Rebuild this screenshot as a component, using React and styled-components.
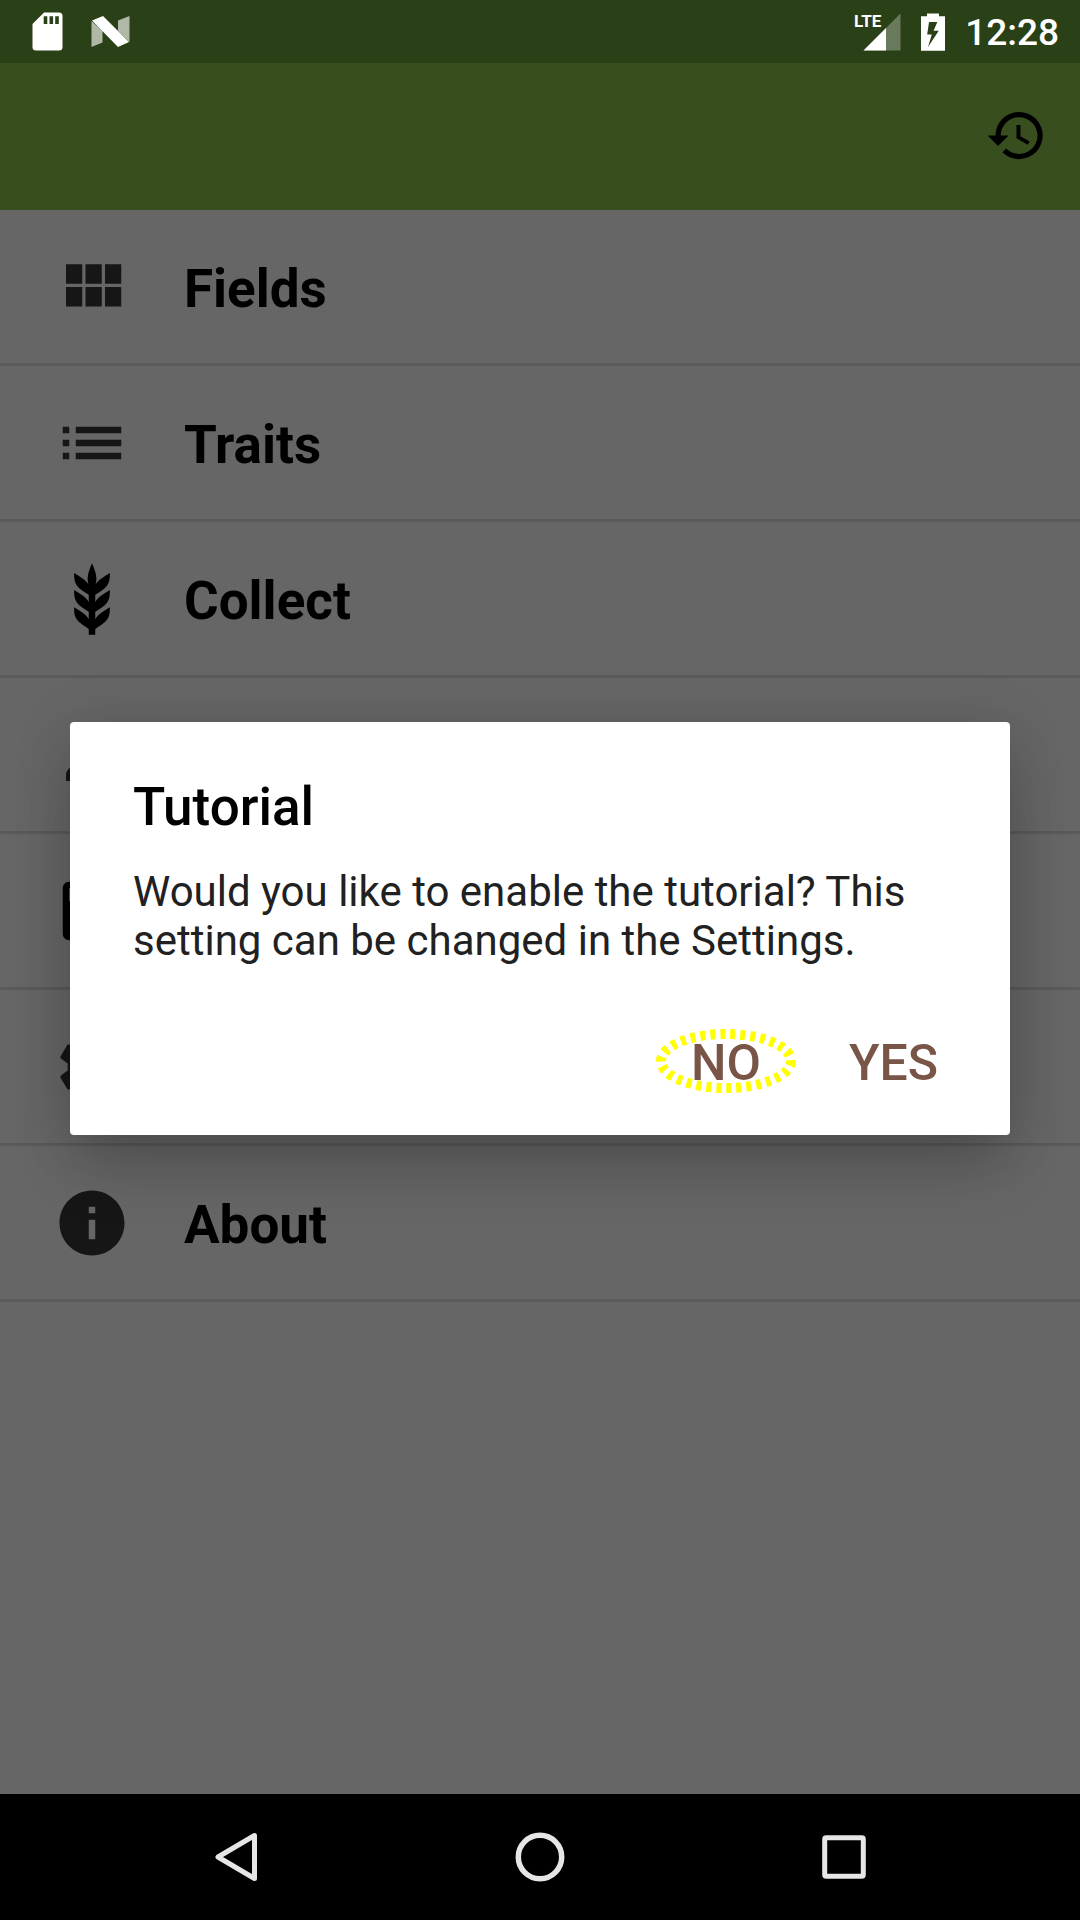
import React from "react";
import styled, { createGlobalStyle } from "styled-components";

const GlobalStyle = createGlobalStyle`
  * { box-sizing: border-box; }
  body { margin: 0; background: #000; font-family: Roboto, "Liberation Sans", sans-serif; }
  button { font-family: inherit; border: 0; background: none; padding: 0; cursor: pointer; }
  svg { display: block; flex: none; }
`;

const Screen = styled.div`
  min-height: 100vh;
  display: grid;
  grid-template-rows: auto 1fr auto;
`;

const StatusBar = styled.header`
  height: 63px;
  padding: 0 21px 0 32px;
  display: flex;
  align-items: center;
  justify-content: space-between;
  background: #2a4017;
  color: #fff;
`;

const StatusGroup = styled.div`
  display: flex;
  align-items: center;
  gap: ${(p) => p.$gap}px;
`;

const Clock = styled.time`
  font-size: 37px;
  line-height: 40px;
  font-weight: 500;
  padding-top: 3px;
`;

const Stage = styled.div`
  display: grid;
  > * { grid-area: 1 / 1; min-width: 0; }
`;

const AppBody = styled.main`
  background: #fff;
`;

const Toolbar = styled.div`
  height: 147px;
  padding: 0 32px 2px;
  display: flex;
  align-items: center;
  justify-content: flex-end;
  background: #8cc34e;
`;

const Menu = styled.ul`
  list-style: none;
  margin: 0;
  padding: 0;
`;

const MenuItem = styled.li`
  border-bottom: 3px solid #e2e2e2;
`;

const MenuButton = styled.button`
  width: 100%;
  height: 153px;
  padding: 0 53px;
  display: flex;
  align-items: center;
  gap: 53px;
  color: #000;
  text-align: left;
`;

const MenuLabel = styled.span`
  font-size: 53px;
  line-height: 62px;
  font-weight: 700;
  padding-top: 5px;
`;

const Scrim = styled.div`
  z-index: 1;
  padding: 0 70px;
  display: flex;
  align-items: center;
  justify-content: center;
  background: rgba(0, 0, 0, 0.6);
`;

const Dialog = styled.section`
  width: 100%;
  padding: 54px 41px 9px 63px;
  border-radius: 4px;
  background: #fff;
  box-shadow: 0 38px 60px -6px rgba(0, 0, 0, 0.18), 0 4px 60px rgba(0, 0, 0, 0.14);
`;

const DialogTitle = styled.h1`
  margin: 0;
  font-size: 53px;
  line-height: 62px;
  font-weight: 500;
  color: #000;
`;

const DialogText = styled.p`
  margin: 29px 21px 0 0;
  font-size: 42px;
  line-height: 49px;
  color: #212121;
`;

const Actions = styled.div`
  margin-top: 35px;
  display: flex;
  justify-content: flex-end;
  gap: 26px;
`;

const ActionButton = styled.button`
  position: relative;
  height: 126px;
  padding: 0 31px;
  font-size: 50px;
  line-height: 60px;
  font-weight: 500;
  color: #795548;
`;

const FocusMark = styled.svg`
  position: absolute;
  top: 29px;
  left: 50%;
  transform: translateX(-50%);
`;

const NavBar = styled.nav`
  height: 126px;
  padding: 0 84px;
  display: grid;
  grid-template-columns: repeat(3, 1fr);
  background: #000;
`;

const NavButton = styled.button`
  display: flex;
  align-items: center;
  justify-content: center;
`;

const Icon = ({ d, size = 78, fill = "#373737" }) => (
  <svg width={size} height={size} viewBox="0 0 24 24" fill={fill} aria-hidden="true">
    <path d={d} />
  </svg>
);

const paths = {
  history:
    "M13 3a9 9 0 0 0-9 9H1l3.89 3.89.07.14L9 12H6c0-3.87 3.13-7 7-7s7 3.13 7 7-3.13 7-7 7c-1.93 0-3.68-.79-4.94-2.06l-1.42 1.42A8.954 8.954 0 0 0 13 21a9 9 0 0 0 0-18zm-1 5v5l4.28 2.54.72-1.21-3.5-2.08V8H12z",
  fields:
    "M4 11h5V5H4v6zm0 7h5v-6H4v6zm6 0h5v-6h-5v6zm6 0h5v-6h-5v6zm-6-7h5V5h-5v6zm6-6v6h5V5h-5z",
  traits:
    "M3 13h2v-2H3v2zm0 4h2v-2H3v2zm0-8h2V7H3v2zm4 4h14v-2H7v2zm0 4h14v-2H7v2zM7 7v2h14V7H7z",
  collect:
    "M7.33 18.33C6.5 17.17 6.5 15.83 6.5 14.5C8.17 15.5 9.83 16.5 10.67 17.67L11 18.23V15.95C9.5 15.05 8.08 14.13 7.33 13.08C6.5 11.92 6.5 10.58 6.5 9.25C8.17 10.25 9.83 11.25 10.67 12.42L11 13V10.7C9.5 9.8 8.08 8.88 7.33 7.83C6.5 6.67 6.5 5.33 6.5 4C8.17 5 9.83 6 10.67 7.17C10.77 7.31 10.86 7.46 10.94 7.62C10.77 7 10.66 6.42 10.65 5.82C10.64 4.27 11.3 2.64 12 1C12.7 2.64 13.36 4.27 13.35 5.82C13.34 6.42 13.23 7 13.06 7.62C13.14 7.46 13.23 7.31 13.33 7.17C14.17 6 15.83 5 17.5 4C17.5 5.33 17.5 6.67 16.67 7.83C15.92 8.88 14.5 9.8 13 10.7V13L13.33 12.42C14.17 11.25 15.83 10.25 17.5 9.25C17.5 10.58 17.5 11.92 16.67 13.08C15.92 14.13 14.5 15.05 13 15.95V18.23L13.33 17.67C14.17 16.5 15.83 15.5 17.5 14.5C17.5 15.83 17.5 17.17 16.67 18.33C15.92 19.38 14.5 20.3 13 21.2V23H11V21.2C9.5 20.3 8.08 19.38 7.33 18.33Z",
  profile:
    "M12 12c2.21 0 4-1.79 4-4s-1.79-4-4-4-4 1.79-4 4 1.79 4 4 4zm0 2c-2.67 0-8 1.34-8 4v2h16v-2c0-2.66-5.33-4-8-4z",
  save:
    "M17 3H5c-1.11 0-2 .9-2 2v14c0 1.1.89 2 2 2h14c1.1 0 2-.9 2-2V7l-4-4zm-5 16c-1.66 0-3-1.34-3-3s1.34-3 3-3 3 1.34 3 3-1.34 3-3 3zm3-10H5V5h10v4z",
  settings:
    "M19.43 12.98c.04-.32.07-.64.07-.98s-.03-.66-.07-.98l2.11-1.65c.19-.15.24-.42.12-.64l-2-3.46c-.12-.22-.39-.3-.61-.22l-2.49 1c-.52-.4-1.08-.73-1.69-.98l-.38-2.65C14.46 2.18 14.25 2 14 2h-4c-.25 0-.46.18-.49.42l-.38 2.65c-.61.25-1.17.59-1.69.98l-2.49-1c-.23-.09-.49 0-.61.22l-2 3.46c-.13.22-.07.49.12.64l2.11 1.65c-.04.32-.07.65-.07.98s.03.66.07.98l-2.11 1.65c-.19.15-.24.42-.12.64l2 3.46c.12.22.39.3.61.22l2.49-1c.52.4 1.08.73 1.69.98l.38 2.65c.03.24.24.42.49.42h4c.25 0 .46-.18.49-.42l.38-2.65c.61-.25 1.17-.59 1.69-.98l2.49 1c.23.09.49 0 .61-.22l2-3.46c.12-.22.07-.49-.12-.64l-2.11-1.65zM12 15.5c-1.93 0-3.5-1.57-3.5-3.5s1.57-3.5 3.5-3.5 3.5 1.57 3.5 3.5-1.57 3.5-3.5 3.5z",
  about:
    "M12 2C6.48 2 2 6.48 2 12s4.48 10 10 10 10-4.48 10-10S17.52 2 12 2zm1 15h-2v-6h2v6zm0-8h-2V7h2v2z",
};

const items = [
  { icon: "fields", label: "Fields" },
  { icon: "traits", label: "Traits" },
  { icon: "collect", label: "Collect", fill: "#000" },
  { icon: "profile", name: "Profile" },
  { icon: "save", name: "Export", fill: "#000" },
  { icon: "settings", name: "Settings" },
  { icon: "about", label: "About" },
];

const SdCardIcon = () => (
  <svg width="31" height="39" viewBox="0 0 31 39" aria-hidden="true">
    <path
      fill="#fff"
      fillRule="evenodd"
      d="M12 0.5H27a3.5 3.5 0 0 1 3.5 3.5V35a3.5 3.5 0 0 1-3.5 3.5H4A3.5 3.5 0 0 1 .5 35V12ZM11.7 4.3V12h3.6V4.3ZM17.5 4.3V12h3.6V4.3ZM23.2 4.3V12h3.6V4.3Z"
    />
  </svg>
);

const NougatIcon = () => (
  <svg width="39" height="31" viewBox="0 0 39 31" aria-hidden="true">
    <path fill="#b0b9a8" d="M.5 5 11.5 15V26.500L.5 31ZM27 4.500 38.500 0V26L27 15Z" />
    <path fill="#fff" d="M1 4.500 12 0 38 26 27 31Z" />
  </svg>
);

const SignalIcon = () => (
  <svg width="48" height="50" viewBox="0 -6 48 50" role="img" aria-label="LTE signal">
    <path fill="#6a7b5d" d="M10.500 37.500 47.500 0.500V37.500Z" />
    <path fill="#fff" d="M10.500 37.500 33 15V37.500Z" />
    <text x="1" y="14" fill="#fff" fontFamily="Roboto, sans-serif" fontWeight="700" fontSize="17">
      LTE
    </text>
  </svg>
);

const BatteryIcon = () => (
  <svg width="24" height="38" viewBox="0 0 24 38" aria-hidden="true">
    <path
      fill="#fff"
      fillRule="evenodd"
      d="M6 0.500H18V3.300H24V37.700H0V3.300H6ZM8 9 6.200 21.500H10.800L7 34 17.800 17.800H12.600L16.300 9Z"
    />
  </svg>
);

export default function App() {
  return (
    <>
      <GlobalStyle />
      <Screen>
        <StatusBar>
          <StatusGroup $gap={28}>
            <SdCardIcon />
            <NougatIcon />
          </StatusGroup>
          <StatusGroup $gap={20}>
            <SignalIcon />
            <BatteryIcon />
            <Clock>12:28</Clock>
          </StatusGroup>
        </StatusBar>
        <Stage>
          <AppBody>
            <Toolbar>
              <button type="button" aria-label="History">
                <Icon d={paths.history} size={63} fill="#000" />
              </button>
            </Toolbar>
            <Menu>
              {items.map((item) => (
                <MenuItem key={item.icon}>
                  <MenuButton type="button" aria-label={item.name}>
                    <Icon d={paths[item.icon]} fill={item.fill} />
                    {item.label && <MenuLabel>{item.label}</MenuLabel>}
                  </MenuButton>
                </MenuItem>
              ))}
            </Menu>
          </AppBody>
          <Scrim>
            <Dialog role="dialog" aria-modal="true" aria-labelledby="dialog-title">
              <DialogTitle id="dialog-title">Tutorial</DialogTitle>
              <DialogText>
                Would you like to enable the tutorial? This setting can be changed in the Settings.
              </DialogText>
              <Actions>
                <ActionButton type="button">
                  NO
                  <FocusMark width="140" height="64" viewBox="0 0 140 64" aria-hidden="true">
                    <ellipse
                      cx="70"
                      cy="32"
                      rx="65"
                      ry="27"
                      fill="none"
                      stroke="#ff0"
                      strokeWidth="10"
                      strokeDasharray="5 5"
                    />
                  </FocusMark>
                </ActionButton>
                <ActionButton type="button">YES</ActionButton>
              </Actions>
            </Dialog>
          </Scrim>
        </Stage>
        <NavBar>
          <NavButton type="button" aria-label="Back">
            <svg width="49" height="50" viewBox="0 0 49 50" aria-hidden="true">
              <path d="M42.500 3.500V46.500L6 25Z" fill="none" stroke="#e6e6e6" strokeWidth="5" strokeLinejoin="round" />
            </svg>
          </NavButton>
          <NavButton type="button" aria-label="Home">
            <svg width="50" height="50" viewBox="0 0 50 50" aria-hidden="true">
              <circle cx="25" cy="25" r="21.700" fill="none" stroke="#e6e6e6" strokeWidth="5.500" />
            </svg>
          </NavButton>
          <NavButton type="button" aria-label="Recent apps">
            <svg width="44" height="44" viewBox="0 0 44 44" aria-hidden="true">
              <rect x="2.700" y="2.700" width="38.600" height="38.600" rx="1.500" fill="none" stroke="#e6e6e6" strokeWidth="5" />
            </svg>
          </NavButton>
        </NavBar>
      </Screen>
    </>
  );
}
